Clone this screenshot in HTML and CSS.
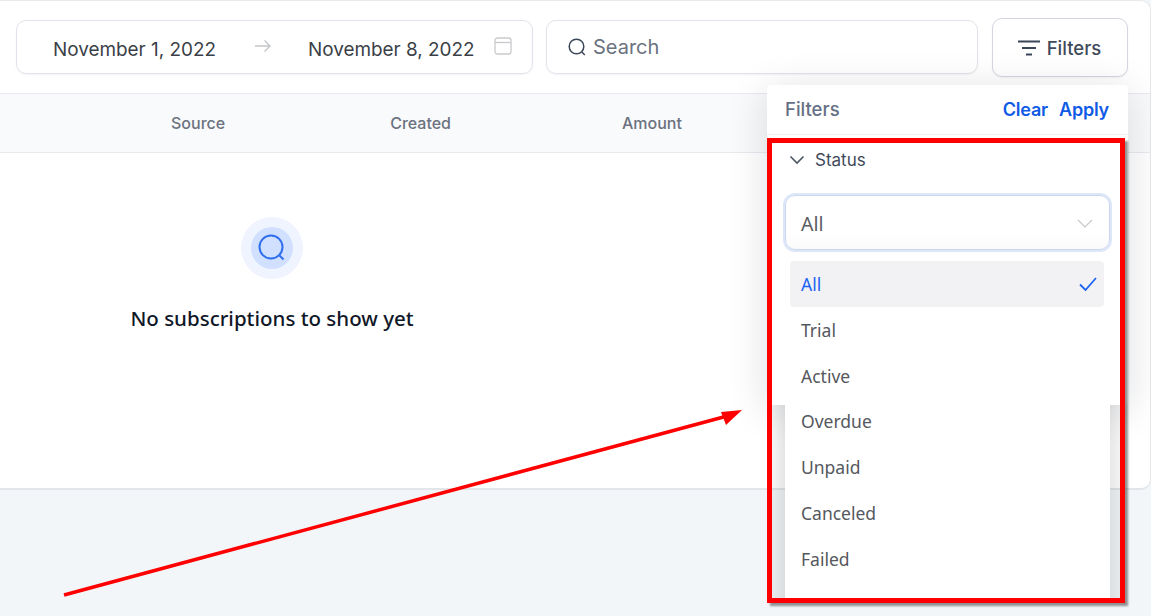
FILE: index.html
```html
<!DOCTYPE html>
<html lang="en">
<head>
<meta charset="utf-8">
<title>Subscriptions</title>
<link rel="stylesheet" href="styles.css">
</head>
<body>
<div class="page">
  <main class="card">
    <div class="toolbar">
      <div class="range">
        <span class="date">November 1, 2022</span>
        <svg class="range-arrow" width="18" height="14" viewBox="0 0 18 14"><path d="M1 7h15M10.500 1.500 16 7l-5.500 5.500" fill="none" stroke="#c4c6c9" stroke-width="1.400"/></svg>
        <span class="date">November 8, 2022</span>
        <svg class="cal" width="18" height="18" viewBox="0 0 18 18"><rect x="1" y="1" width="16" height="16" rx="2.500" fill="none" stroke="#c9cacd" stroke-width="1.300"/><path d="M1 5.500h16" stroke="#c9cacd" stroke-width="1.300"/></svg>
      </div>
      <div class="search">
        <svg width="20" height="20" viewBox="0 0 20 20"><circle cx="9.500" cy="9.500" r="7.300" fill="none" stroke="#3b4658" stroke-width="1.500"/><path d="m14.800 15 3 3" stroke="#3b4658" stroke-width="1.500"/></svg>
        <span>Search</span>
      </div>
      <button class="filters-btn">
        <svg width="22" height="16" viewBox="0 0 22 16"><path d="M0 1.500h22M4 8h14M8 14.500h6" stroke="#3b4658" stroke-width="1.800"/></svg>
        <span>Filters</span>
      </button>
    </div>
    <div class="thead">
      <span class="th th-source">Source</span>
      <span class="th th-created">Created</span>
      <span class="th th-amount">Amount</span>
    </div>
    <div class="empty">
      <div class="halo">
        <div class="halo-inner">
          <svg width="30" height="30" viewBox="0 0 30 30"><circle cx="14" cy="14" r="11.500" fill="none" stroke="#2f6fed" stroke-width="2"/><path d="m22.500 22.500 4 4" stroke="#2f6fed" stroke-width="2"/></svg>
        </div>
      </div>
      <p class="empty-text">No subscriptions to show yet</p>
    </div>
  </main>

  <section class="panel">
    <div class="panel-head">
      <span class="panel-title">Filters</span>
      <span class="panel-actions"><a>Clear</a><a>Apply</a></span>
    </div>
  </section>

  <section class="callout">
    <div class="status-body">
      <div class="status-head">
        <svg width="16" height="10" viewBox="0 0 16 10"><path d="m1.500 1.500 6.500 6.500 6.500-6.500" fill="none" stroke="#4b5563" stroke-width="1.600"/></svg>
        <span>Status</span>
      </div>
      <div class="select">
        <span>All</span>
        <svg width="16" height="9" viewBox="0 0 16 9"><path d="m1 1 7 7 7-7" fill="none" stroke="#c8c8c8" stroke-width="1.200"/></svg>
      </div>
    </div>
    <ul class="menu">
      <li class="opt opt-active"><span>All</span><svg width="18" height="14" viewBox="0 0 18 14"><path d="m1 7.500 5.500 5.500 10.500-12" fill="none" stroke="#1d64f2" stroke-width="1.800"/></svg></li>
      <li class="opt">Trial</li>
      <li class="opt">Active</li>
      <li class="opt">Overdue</li>
      <li class="opt">Unpaid</li>
      <li class="opt">Canceled</li>
      <li class="opt">Failed</li>
      <li class="opt">Incomplete</li>
    </ul>
  </section>

  <svg class="arrow" width="700" height="200" viewBox="0 0 700 200">
    <path d="M1 188 668 8" stroke="#f00" stroke-width="3.500" fill="none"/>
    <path d="M658 5 679 3 663 18Z" fill="#f00"/>
  </svg>
</div>
</body>
</html>
```
FILE: styles.css
```css
* { box-sizing: border-box; }
html, body { margin: 0; height: 100%; }
body { background: #f2f6f9; font-family: Inter, "Liberation Sans", sans-serif; color: #374151; overflow: hidden; }
.page { position: relative; width: 1151px; height: 616px; overflow: hidden; }

.card { width: 1151px; height: 490px; background: #fff; border-top: 1px solid #e8eaee; border-right: 1px solid #e5e7eb; border-bottom: 2px solid #e2e5e9; border-radius: 0 10px 10px 0; }
.toolbar { display: flex; align-items: flex-start; height: 92px; padding: 17px 22px 0 16px; }
.range { display: flex; align-items: center; width: 517px; height: 54px; margin-top: 2px; padding: 0 20px 0 36px; border: 1px solid #e2e3ea; border-radius: 10px; box-shadow: 0 1px 2px rgba(0,0,0,.05); font-size: 18.900px; }
.date { margin-top: 5px; color: #3a3f47; white-space: nowrap; }
.range-arrow { margin: -2px 36px 0 38px; }
.cal { margin: -2px 0 0 auto; }
.search { display: flex; align-items: center; gap: 6px; width: 432px; height: 54px; margin: 2px 0 0 13px; padding: 0 17px 0 20px; border: 1px solid #e2e3ea; border-radius: 10px; box-shadow: 0 1px 2px rgba(0,0,0,.05); font-size: 20px; color: #6b7280; }
.filters-btn { display: flex; align-items: center; justify-content: center; gap: 7px; width: 136px; height: 59px; margin-left: 14px; padding: 0 1px 0 0; background: #fff; border: 1px solid #d3d6e0; border-radius: 10px; box-shadow: 0 1px 2px rgba(0,0,0,.05); font: 500 18.500px Inter, "Liberation Sans", sans-serif; color: #3f4a5a; }

.thead { position: relative; display: flex; align-items: center; height: 60px; background: #f9fafb; border-top: 1px solid #e8eaee; border-bottom: 1px solid #e8eaee; }
.th { font-size: 16px; font-weight: 500; color: #6b7280; }
.th-source { margin-left: 171px; }
.th-created { margin-left: 165px; }
.th-amount { margin-left: 171px; }

.empty { display: flex; flex-direction: column; align-items: center; width: 544px; padding-top: 64px; }
.halo { display: flex; align-items: center; justify-content: center; width: 62px; height: 62px; border-radius: 50%; background: #eff4ff; }
.halo-inner { display: flex; align-items: center; justify-content: center; width: 42px; height: 42px; border-radius: 50%; background: #d1e0ff; }
.empty-text { margin: 25px 0 0; font-family: "Noto Sans", sans-serif; font-size: 20.500px; font-weight: 500; color: #101828; white-space: nowrap; }

.panel { position: absolute; left: 767px; top: 85px; width: 361px; height: 320px; background: #fff; border-radius: 4px; box-shadow: 0 6px 40px rgba(16,24,40,.14); }
.panel-head { display: flex; justify-content: space-between; align-items: center; height: 50px; padding: 0 19px 0 18px; border-bottom: 1px solid #eceef1; }
.panel-title { margin-top: -2px; font-size: 18.500px; font-weight: 500; color: #667085; }
.panel-actions { display: flex; gap: 11px; font-size: 18px; font-weight: 600; letter-spacing: -.2px; color: #0f5ae6; }

.callout { position: absolute; left: 767px; top: 138px; width: 358px; height: 465px; border: 5px solid #f00; box-shadow: 3px 3px 2px rgba(60,60,60,.55); overflow: hidden; }
.callout::before { content: ""; position: absolute; left: 0; right: 0; top: 262px; bottom: 0; background: linear-gradient(90deg, rgba(0,0,0,.04), rgba(0,0,0,.10) 13px, rgba(0,0,0,.10) 335px, rgba(0,0,0,.05)); }
.status-body { position: relative; padding: 7px 0 0 17px; }
.status-head { display: flex; align-items: center; gap: 10px; height: 20px; font-size: 17px; color: #3f4a5a; }
.select { display: flex; align-items: center; justify-content: space-between; width: 325px; height: 55px; margin: 25px 0 0 -4px; padding: 2px 16px 0 15px; background: linear-gradient(#fff 70%, #fafafa); border: 1px solid #c9d7f2; border-radius: 10px; box-shadow: 0 0 0 2px #dde7f8; font-family: "Noto Sans", sans-serif; font-size: 19.500px; color: #5a5d63; }
.menu { position: relative; list-style: none; width: 325px; margin: 5px 0 0 13px; padding: 6px 6px 6px 5px; background: #fff; border-radius: 4px; font-family: "Noto Sans", sans-serif; }
.opt { display: flex; align-items: center; justify-content: space-between; height: 45.830px; padding: 0 7px 0 11px; font-size: 17.500px; color: #55585e; border-radius: 4px; }
.opt-active { background: #f2f2f5; color: #1d64f2; }

.arrow { position: absolute; left: 63px; top: 407px; overflow: visible; }
```
